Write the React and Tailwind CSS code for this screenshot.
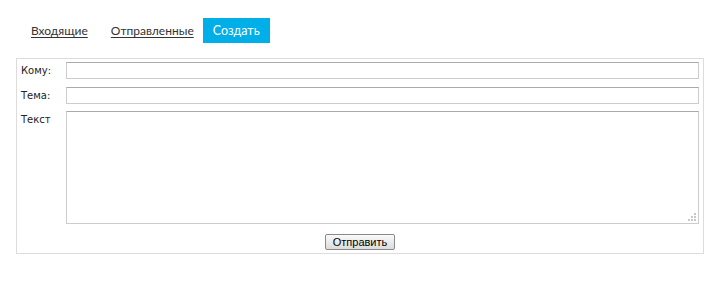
import { useState } from 'react';

const tabs = ['Входящие', 'Отправленные', 'Создать'];

function Grip() {
  // faint dotted resize grip like the reference textarea corner
  const dots = [
    [6, 0], [6, 3], [6, 6], [3, 3], [3, 6], [0, 6],
  ];
  return (
    <svg width="8" height="8" className="absolute right-[3px] bottom-[3px]">
      {dots.map(([x, y], i) => (
        <rect key={i} x={x} y={y} width="2" height="2" fill="#c8c8c8" />
      ))}
    </svg>
  );
}

export default function App() {
  const [active, setActive] = useState('Создать');

  return (
    <div className="w-[720px] h-[283px] bg-white font-['DejaVu_Sans',sans-serif]">
      <div className="flex items-center pt-[18px] pl-[21px] h-[43px] font-['Lato',sans-serif]">
        {tabs.map((t, i) => (
          <button
            key={t}
            onClick={() => setActive(t)}
            className={
              t === active
                ? 'h-[25px] w-[67px] -ml-[1px] bg-[#00aee8] text-white text-[12.5px] leading-[25px]'
                : i === 0
                ? 'h-[25px] px-[10px] mr-[3px] text-[#333] text-[12px] leading-[25px] underline underline-offset-2'
                : 'h-[25px] px-[10px] text-[#333] text-[12px] leading-[25px] underline underline-offset-2'
            }
          >
            {t}
          </button>
        ))}
      </div>

      <div className="mt-[15px] ml-[16px] w-[688px] h-[196px] border border-[#dcdcdc]">
        <div className="grid grid-cols-[45px_1fr] items-start gap-y-[8px] pt-[3px] pl-[4px] pr-[4px] text-[10px] leading-[14px] text-[#222]">
          <label className="pt-[2px]">Кому:</label>
          <input
            type="text"
            className="h-[17px] border border-[#ccc] border-t-[#aaa] outline-none"
          />
          <label className="pt-[2px]">Тема:</label>
          <input
            type="text"
            className="h-[17px] border border-[#ccc] border-t-[#aaa] outline-none"
          />
          <label className="pt-[1px]">Текст</label>
          <div className="relative h-[113px] -mt-[1px]">
            <textarea className="block w-full h-full resize-none border border-[#ccc] border-t-[#aaa] outline-none" />
            <Grip />
          </div>
        </div>
        <div className="flex justify-center pt-[10px]">
          <button className="h-[16px] w-[70px] rounded-[2px] border border-[#8a8a8a] bg-gradient-to-b from-[#fafafa] to-[#dcdcdc] text-[11px] leading-[14px] text-black font-['Liberation_Sans',sans-serif]">
            Отправить
          </button>
        </div>
      </div>
    </div>
  );
}
